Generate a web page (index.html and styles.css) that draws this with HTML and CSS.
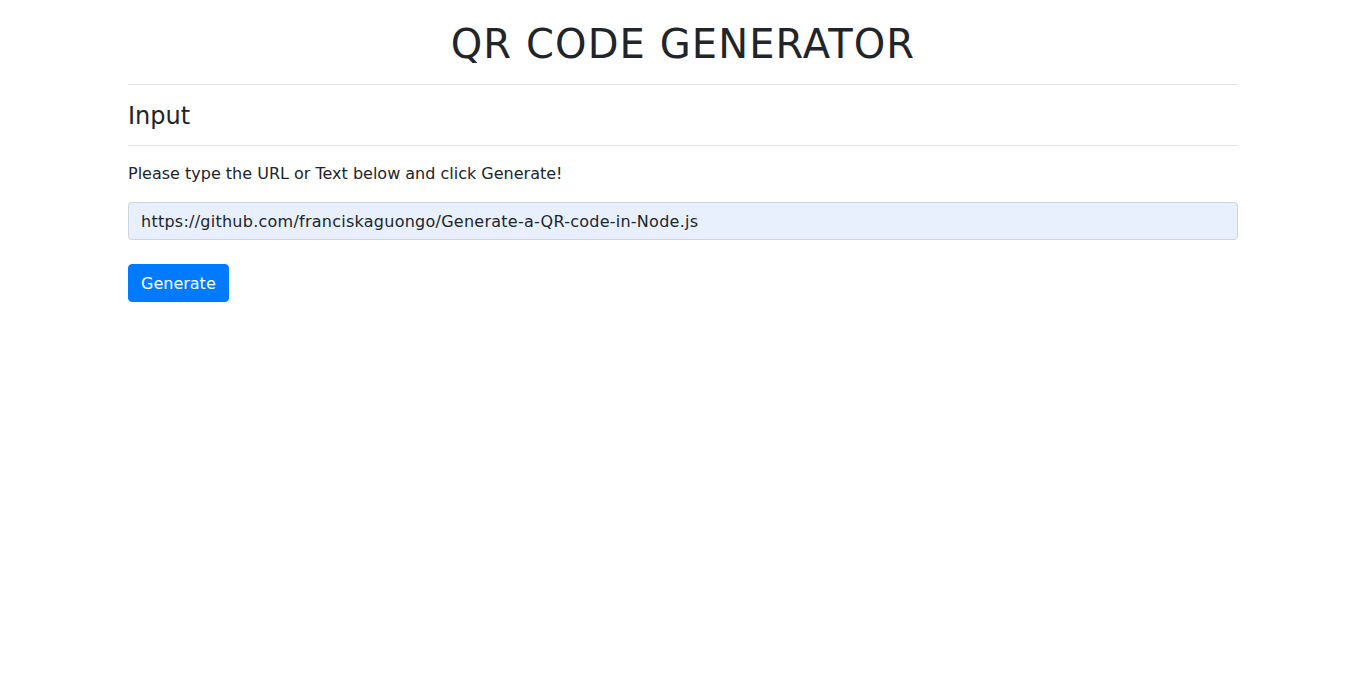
FILE: index.html
```html
<!DOCTYPE html>
<html lang="en">
<head>
<meta charset="utf-8">
<title>QR Code Generator</title>
<link rel="stylesheet" href="styles.css">
</head>
<body>
<div class="container">
  <h1 class="title">QR CODE GENERATOR</h1>
  <hr class="rule">
  <h4 class="section-title">Input</h4>
  <hr class="rule rule-small">
  <p class="hint">Please type the URL or Text below and click Generate!</p>
  <form class="qr-form">
    <input class="url-input" type="text" value="https://github.com/franciskaguongo/Generate-a-QR-code-in-Node.js">
    <button class="btn-generate" type="button">Generate</button>
  </form>
</div>
</body>
</html>
```

FILE: styles.css
```css
* { box-sizing: border-box; }
html, body { margin: 0; padding: 0; background: #fff; }
body {
  font-family: "DejaVu Sans", "Open Sans", sans-serif;
  font-size: 16px;
  line-height: 1.5;
  color: #212529;
}
.container {
  max-width: 1140px;
  margin: 0 auto;
  padding: 0 15px;
}
.title {
  margin: 0;
  padding-top: 20px;
  font-size: 40px;
  font-weight: 400;
  line-height: 48px;
  letter-spacing: 1.1px;
  text-align: center;
  color: #212529;
}
.rule {
  margin: 16px 0 0;
  border: 0;
  border-top: 1px solid #e2e2e2;
}
.section-title {
  margin: 0;
  padding-top: 17px;
  font-size: 24px;
  font-weight: 400;
  line-height: 29px;
}
.rule-small { margin-top: 14px; }
.hint {
  margin: 16px 0 0;
  line-height: 24px;
}
.qr-form {
  display: flex;
  flex-direction: column;
  align-items: flex-start;
  gap: 24px;
  margin-top: 16px;
}
.url-input {
  width: 100%;
  height: 38px;
  padding: 6px 12px;
  font-family: inherit;
  font-size: 16px;
  letter-spacing: 0.25px;
  color: #212529;
  background: #e8f0fe;
  border: 1px solid #ced4da;
  border-radius: 4px;
}
.btn-generate {
  height: 38px;
  padding: 6px 12px;
  font-family: inherit;
  font-size: 16px;
  color: #fff;
  background: #007bff;
  border: 1px solid #007bff;
  border-radius: 4px;
}
```
